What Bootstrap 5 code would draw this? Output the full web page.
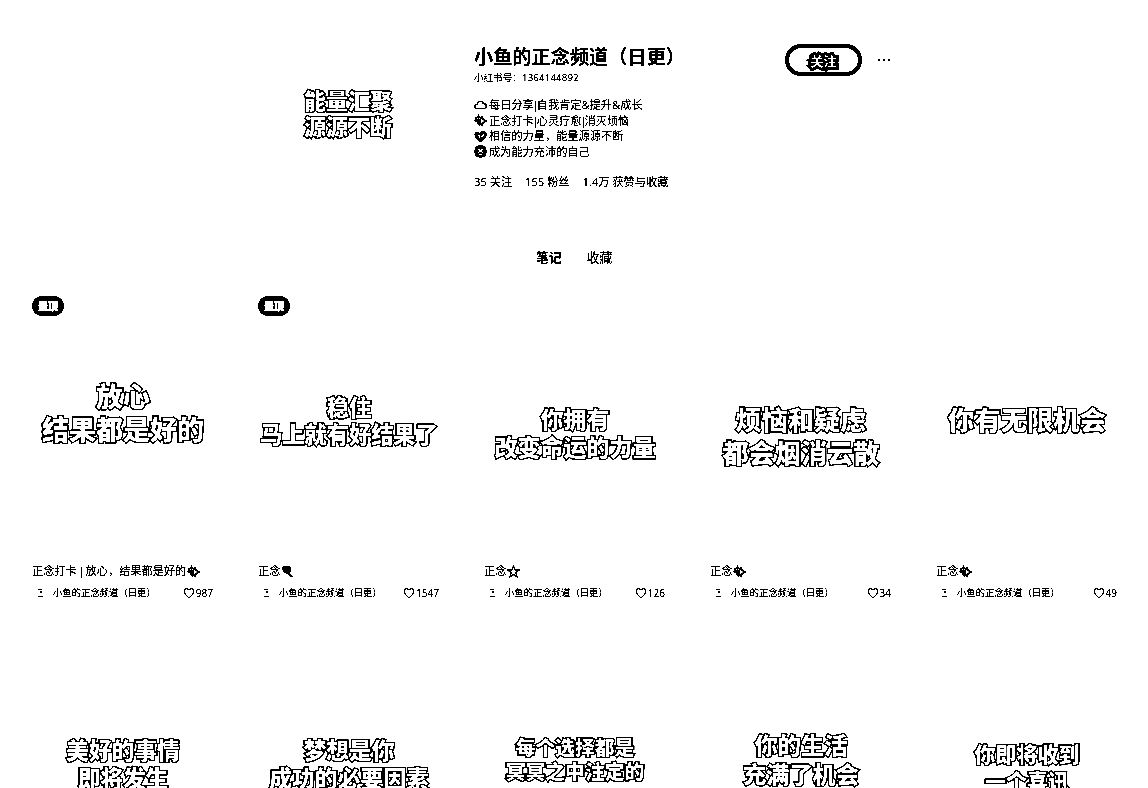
<!DOCTYPE html>
<html lang="zh-CN">
<head>
<meta charset="utf-8">
<meta name="viewport" content="width=device-width, initial-scale=1">
<title>小鱼的正念频道（日更）</title>
<link href="https://cdn.jsdelivr.net/npm/bootstrap@5.3.0/dist/css/bootstrap.min.css" rel="stylesheet">
<style>
html{background:#fff}
body{height:788px;overflow:hidden;background:#fff;color:#000;font-family:"Open Sans","Noto Sans CJK SC",sans-serif;font-size:11.2px;line-height:16px}
main{height:788px;overflow:hidden;background:#fff;filter:brightness(.8) contrast(30)}
.profile{height:240px;padding-left:258px}
.portrait{width:180px;margin-right:36px;padding-top:86px}
.about{width:311px;padding-top:44px}
.about h1{font-size:19.2px;line-height:25px;font-weight:700;margin:0;white-space:nowrap}
.uid{font-size:9.6px;line-height:16px;margin-top:1px;white-space:nowrap}
.uid span{letter-spacing:.2px}
.bio{margin-top:11px;line-height:15.7px;white-space:nowrap}
.bar{display:inline-block;width:3px;text-indent:-1.5px;font-style:normal}
.ico{width:13px;height:13px;flex:none}
.bio .ico{margin-right:2px}
.stats{margin-top:14px;gap:13px;white-space:nowrap}
.outlined{font-family:"Noto Sans CJK SC",sans-serif;font-weight:900;color:#fff;-webkit-text-stroke:2.4px #000;paint-order:stroke fill;text-align:center;white-space:nowrap}
.follow{width:77px;height:32px;margin-top:44px;border:4px solid #000;border-radius:16px;font-size:14px;line-height:24px;background:#fff;padding:0}
.follow b{-webkit-text-stroke:5.5px #000;paint-order:stroke fill;color:#fff;font-size:13px;font-weight:700}
.dots{margin:59px 0 0 16px;height:2px;gap:3px}
.dots i{width:2px;height:2px;background:#000}
.tabs{height:48px;padding:9px 0 0 536px;font-size:12.8px;gap:25px}
.feed{display:grid;grid-template-columns:repeat(5,182px);column-gap:44px;padding-left:32px;grid-auto-rows:328px}
.cover{height:274px;position:relative;display:flex;flex-direction:column;align-items:center}
.pin{position:absolute;left:0;top:8px;width:32px;height:20px;border-radius:10px;background:#000;color:#fff;font-size:10px;font-weight:900;-webkit-text-stroke:.8px #fff;line-height:20px;text-align:center}
.a0{font-size:22px;line-height:26px}
.a1{font-size:27px;line-height:32.5px;padding-top:92px}
.a2{font-size:22.2px;line-height:27px;padding-top:105px}
.a3{font-size:23px;line-height:28.5px;padding-top:115.5px}
.a4{font-size:26.2px;line-height:32.5px;padding-top:115px}
.a5{font-size:26.3px;line-height:32px;padding-top:115px}
.a6{font-size:22.7px;line-height:27.5px;padding-top:120px}
.a7{font-size:22.8px;line-height:28px;padding-top:120px}
.a8{font-size:19.8px;line-height:24px;padding-top:119px}
.a9{font-size:23.2px;line-height:29px;padding-top:114px}
.a10{font-size:21px;line-height:27px;padding-top:124px}
.note-title{height:18px;white-space:nowrap}
.note-title .ico{margin-left:1px}
.byline{height:26px;font-size:9.35px;white-space:nowrap}
.speck{width:5px;height:8px;margin:0 10px 0 6px;flex:none}
.likes{font-size:10px;margin-right:1px}
.likes .ico{width:12px;height:12px;margin-right:1px}
</style>
</head>
<body>
<svg class="d-none" aria-hidden="true">
<symbol id="heart" viewBox="0 0 12 12"><path d="M6 10.7C3.7 9 1.2 7 1.2 4.2 1.2 1.8 4 .9 6 2.8 8 .9 10.8 1.8 10.8 4.2 10.8 7 8.3 9 6 10.7Z" fill="none" stroke="#000" stroke-width="1.1"/></symbol>
<symbol id="spark" viewBox="0 0 13 13"><path d="M8 2.5 9.2 5.6 12.4 7 9.2 8.4 8 11.6 6.6 8.4 4.5 7 6.6 5.6Z" fill="#fff" stroke="#000" stroke-width="1.3"/><path d="M4.5 0 5.3 2 7 3 5.3 4 4.5 6 3.5 4 2 3 3.5 2ZM1.5 2.5 3 5 5.5 6.5 4.5 8 6.5 9.5 6 12 4 10.5 3 8.5 0 7 1.5 5.5Z"/></symbol>
<symbol id="star" viewBox="0 0 13 13"><path d="M6.5 1 8.1 4.8 12.2 5 9 7.7 10 11.8 6.5 9.5 3 11.8 4 7.7.8 5 4.9 4.8Z" fill="none" stroke="#000" stroke-width="1.2"/></symbol>
</svg>
<main>
<header class="profile d-flex">
<div class="portrait"><div class="outlined a0">能量汇聚<br>源源不断</div></div>
<div class="about">
<h1>小鱼的正念频道（日更）</h1>
<div class="uid">小红书号：<span>1364144892</span></div>
<div class="bio">
<div class="d-flex align-items-center"><svg class="ico" viewBox="0 0 13 13"><path d="M3 10.5C-.5 10 .5 6.5 3.2 6.5 3.5 2.6 8.5 2.2 9.3 5.6 13 5.5 13.3 10 10.2 10.5Z" fill="none" stroke="#000" stroke-width="1.2"/></svg><span>每日分享<i class="bar">|</i>自我肯定&amp;提升&amp;成长</span></div>
<div class="d-flex align-items-center"><svg class="ico"><use href="#spark"/></svg><span>正念打卡<i class="bar">|</i>心灵疗愈<i class="bar">|</i>消灭烦恼</span></div>
<div class="d-flex align-items-center"><svg class="ico" viewBox="0 0 13 13"><path d="M6.3 12.5C3 10.5.5 7.5.5 4.5.7 1.2 4 .8 6 3 8-.2 13 .6 12.7 4.7 12.3 8 9.5 10.8 6.3 12.5Z"/><path d="M3.5 4.5 5.5 6V8.5M7.5 7 10.5 3.5" fill="none" stroke="#fff" stroke-width="1.2"/></svg>相信的力量，能量源源不断</div>
<div class="d-flex align-items-center"><svg class="ico" viewBox="0 0 13 13"><rect x=".5" y=".5" width="12" height="12" rx="4.8"/><path d="M4.2 3.8 8.8 7.8M8.8 3.8 4.2 7.8M4.5 9.5H8.5" stroke="#fff" stroke-width="1.5"/></svg>成为能力充沛的自己</div>
</div>
<div class="stats d-flex"><span>35 关注</span><span>155 粉丝</span><span>1.4万 获赞与收藏</span></div>
</div>
<button class="follow outlined"><b>关注</b></button>
<div class="dots d-flex"><i></i><i></i><i></i></div>
</header>
<nav class="tabs d-flex"><b>笔记</b><span>收藏</span></nav>
<section class="feed">
<article><div class="cover"><span class="pin">置顶</span><div class="outlined a1">放心<br>结果都是好的</div></div><div class="note-title d-flex align-items-center"><span>正念打卡 <i class="bar">|</i> 放心，结果都是好的</span><svg class="ico"><use href="#spark"/></svg></div><div class="byline d-flex align-items-center"><svg class="speck" viewBox="0 0 5 8"><path d="M0 .5H4M2 3H4M0 7.5H5" stroke="#000"/></svg><span>小鱼的正念频道（日更）</span><span class="likes d-flex align-items-center ms-auto"><svg class="ico"><use href="#heart"/></svg>987</span></div></article>
<article><div class="cover"><span class="pin">置顶</span><div class="outlined a2">稳住<br>马上就有好结果了</div></div><div class="note-title d-flex align-items-center">正念<svg class="ico" viewBox="0 0 13 13"><path d="M2 1H8L10 3V7L8.5 8 12 11.5 10.5 12.5 6.5 9 3 7.5 1 4Z"/><path d="M6 3V6" stroke="#fff"/></svg></div><div class="byline d-flex align-items-center"><svg class="speck" viewBox="0 0 5 8"><path d="M0 .5H4M2 3H4M0 7.5H5" stroke="#000"/></svg><span>小鱼的正念频道（日更）</span><span class="likes d-flex align-items-center ms-auto"><svg class="ico"><use href="#heart"/></svg>1547</span></div></article>
<article><div class="cover"><div class="outlined a3">你拥有<br>改变命运的力量</div></div><div class="note-title d-flex align-items-center">正念<svg class="ico"><use href="#star"/></svg></div><div class="byline d-flex align-items-center"><svg class="speck" viewBox="0 0 5 8"><path d="M0 .5H4M2 3H4M0 7.5H5" stroke="#000"/></svg><span>小鱼的正念频道（日更）</span><span class="likes d-flex align-items-center ms-auto"><svg class="ico"><use href="#heart"/></svg>126</span></div></article>
<article><div class="cover"><div class="outlined a4">烦恼和疑虑<br>都会烟消云散</div></div><div class="note-title d-flex align-items-center">正念<svg class="ico"><use href="#spark"/></svg></div><div class="byline d-flex align-items-center"><svg class="speck" viewBox="0 0 5 8"><path d="M0 .5H4M2 3H4M0 7.5H5" stroke="#000"/></svg><span>小鱼的正念频道（日更）</span><span class="likes d-flex align-items-center ms-auto"><svg class="ico"><use href="#heart"/></svg>34</span></div></article>
<article><div class="cover"><div class="outlined a5">你有无限机会</div></div><div class="note-title d-flex align-items-center">正念<svg class="ico"><use href="#spark"/></svg></div><div class="byline d-flex align-items-center"><svg class="speck" viewBox="0 0 5 8"><path d="M0 .5H4M2 3H4M0 7.5H5" stroke="#000"/></svg><span>小鱼的正念频道（日更）</span><span class="likes d-flex align-items-center ms-auto"><svg class="ico"><use href="#heart"/></svg>49</span></div></article>
<article><div class="cover"><div class="outlined a6">美好的事情<br>即将发生</div></div></article>
<article><div class="cover"><div class="outlined a7">梦想是你<br>成功的必要因素</div></div></article>
<article><div class="cover"><div class="outlined a8">每个选择都是<br>冥冥之中注定的</div></div></article>
<article><div class="cover"><div class="outlined a9">你的生活<br>充满了机会</div></div></article>
<article><div class="cover"><div class="outlined a10">你即将收到<br>一个喜讯</div></div></article>
</section>
</main>
<script src="https://cdn.jsdelivr.net/npm/bootstrap@5.3.0/dist/js/bootstrap.bundle.min.js"></script>
</body>
</html>
